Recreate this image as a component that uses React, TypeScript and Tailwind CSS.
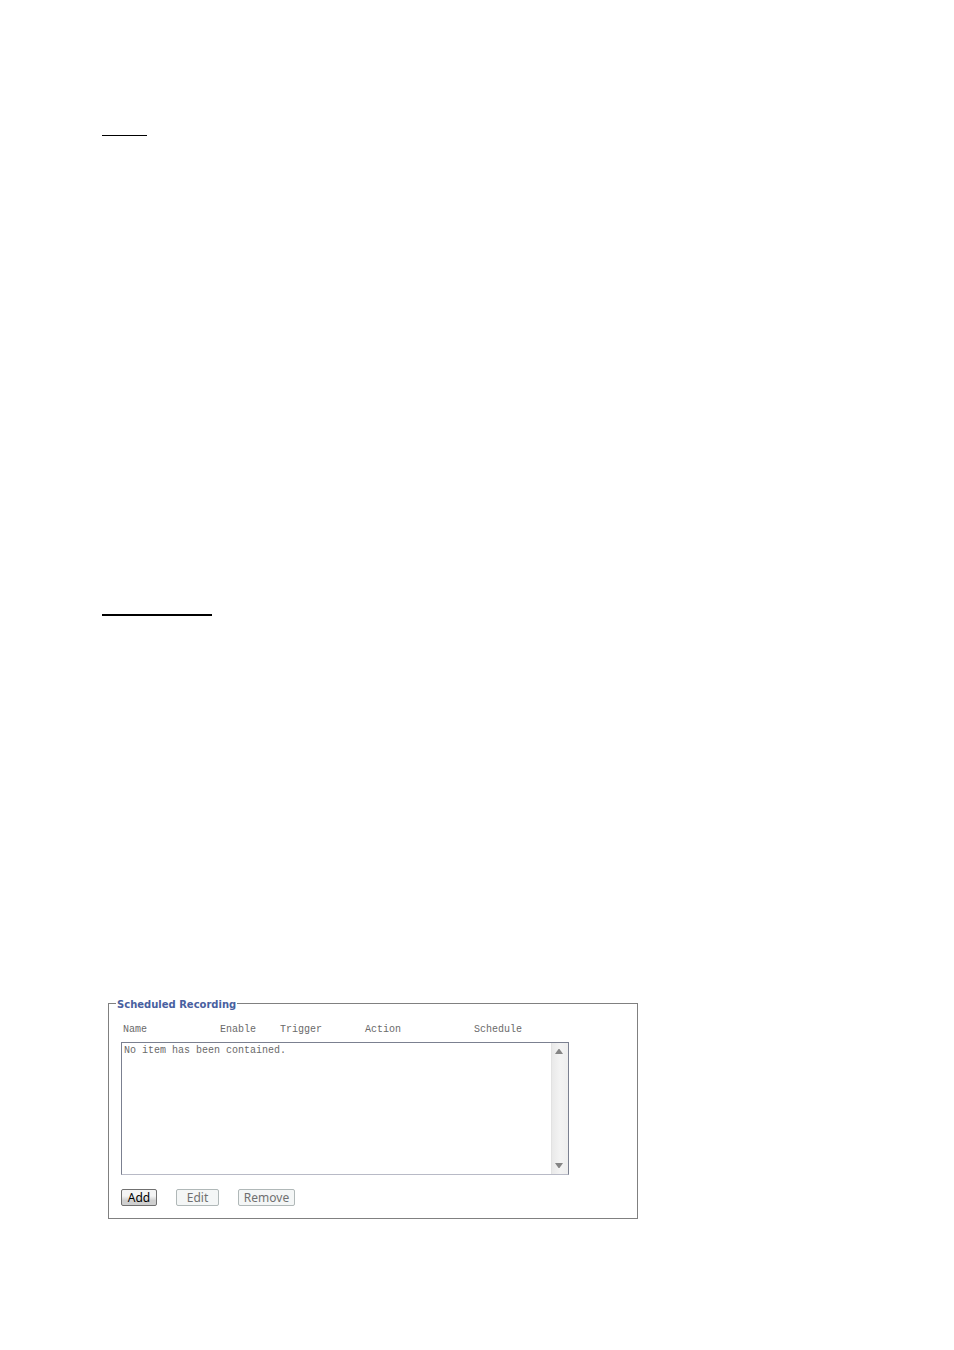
const columns = ["Name", "Enable", "Trigger", "Action", "Schedule"];

const buttonBase =
  "flex h-[17px] items-center justify-center rounded-[2px] border text-[12px] leading-[16px] font-['Noto_Sans',sans-serif]";

function ScrollTrack() {
  return (
    <div
      aria-hidden="true"
      className="flex w-[17px] shrink-0 flex-col items-center justify-between border-l border-[#e2e2e2] bg-gradient-to-r from-[#e9e9e9] via-[#f3f3f3] to-[#eeeeee] py-[6px] pr-[2px]"
    >
      <svg width="8" height="5" viewBox="0 0 8 5">
        <path d="M3.5 0h1L8 5H0z" fill="#858585" />
      </svg>
      <svg width="8" height="5" viewBox="0 0 8 5">
        <path d="M0 0h8L4.500 5h-1z" fill="#858585" />
      </svg>
    </div>
  );
}

export default function App() {
  return (
    <main className="min-h-screen bg-white pt-[135px] pb-32 pl-[102px] font-['DejaVu_Sans',sans-serif]">
      <hr className="w-[45px] border-0 border-t border-black" />
      <hr className="mt-[478px] w-[110px] border-0 border-t-2 border-black" />

      <form
        className="mt-[379px] mr-4 ml-[6px] max-w-[530px]"
        onSubmit={(event) => event.preventDefault()}
      >
        <fieldset className="min-w-0 border border-[#808080] px-[12px] pb-[12px]">
          <legend className="-ml-[5px] px-px pt-[4px] text-[10px] leading-[12px] font-bold text-[#4860a0]">
            Scheduled Recording
          </legend>

          <div className="mt-[13px] grid grid-cols-[97px_60px_85px_109px_1fr] pl-[2px] font-['Liberation_Mono',monospace] text-[10px] leading-[12px] text-[#6a6a6a]">
            {columns.map((column) => (
              <span key={column}>{column}</span>
            ))}
          </div>

          <div className="mt-[6px] flex h-[133px] max-w-[448px] border border-[#7b8090] border-b-[#b8bac6]">
            <select
              size={8}
              aria-label="Scheduled recordings"
              className="h-full min-w-0 flex-1 appearance-none overflow-hidden bg-white py-[2px] font-['Liberation_Mono',monospace] text-[10px] leading-[12px] text-[#6a6a6a] outline-none"
            >
              <option className="min-h-0 px-[2px] py-0">No item has been contained.</option>
            </select>
            <ScrollTrack />
          </div>

          <div className="mt-[14px] flex gap-[19px]">
            <button
              type="button"
              className={`${buttonBase} w-[36px] border-[#707070] bg-gradient-to-b from-[#f4f4f4] from-40% to-[#cfcfcf] to-70% text-black`}
            >
              Add
            </button>
            <button
              type="button"
              disabled
              className={`${buttonBase} w-[43px] border-[#b0b8b8] bg-[#f4f6f6] text-[#707070]`}
            >
              Edit
            </button>
            <button
              type="button"
              disabled
              className={`${buttonBase} w-[57px] border-[#b0b8b8] bg-[#f4f6f6] text-[#707070]`}
            >
              Remove
            </button>
          </div>
        </fieldset>
      </form>
    </main>
  );
}
